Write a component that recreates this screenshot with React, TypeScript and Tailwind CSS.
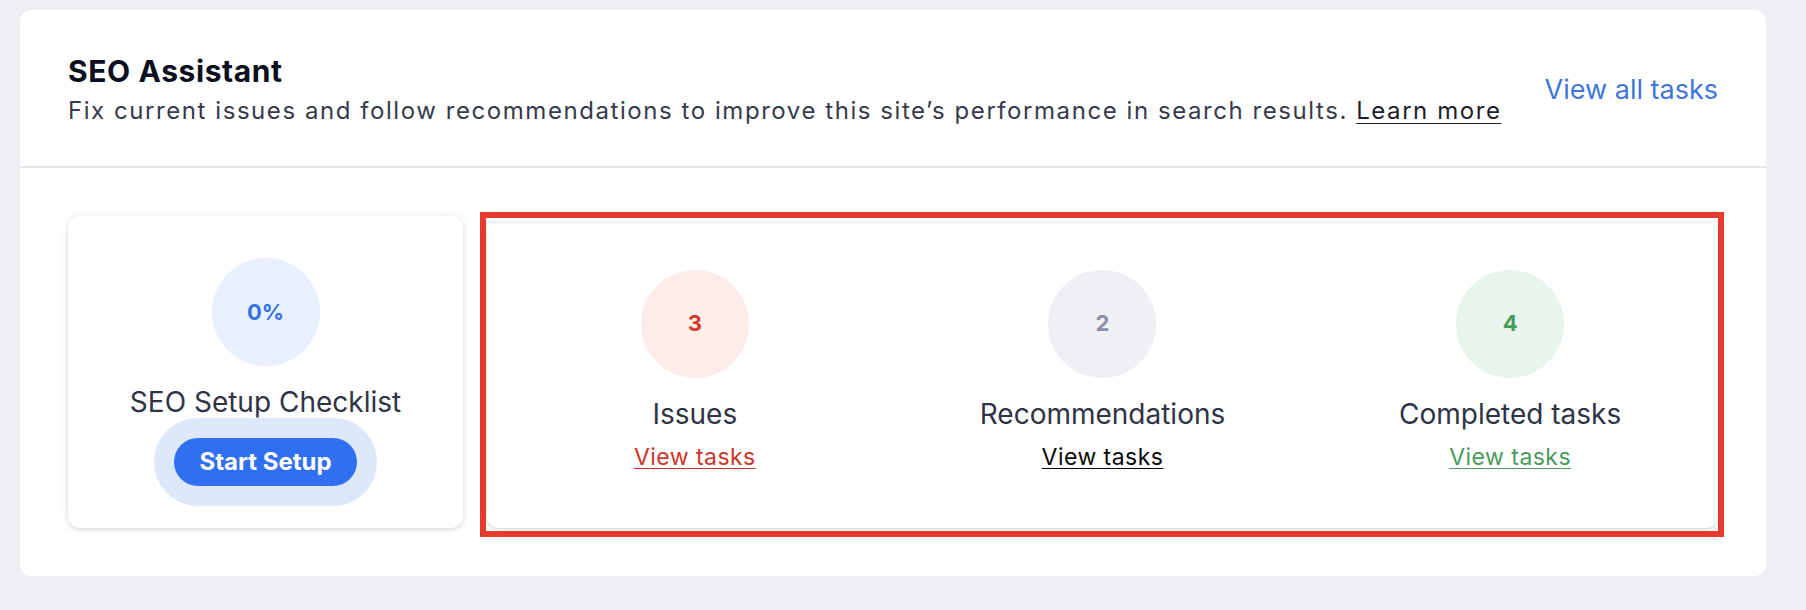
import React from "react";

function StatColumn({
  value,
  label,
  circleBg,
  valueColor,
  linkColor,
}: {
  value: string;
  label: string;
  circleBg: string;
  valueColor: string;
  linkColor: string;
}) {
  return (
    <div className="flex flex-col items-center justify-center pb-[4px]">
      <div className={`flex h-[108px] w-[108px] items-center justify-center rounded-full ${circleBg}`}>
        <span className={`text-[22px] font-bold ${valueColor}`}>{value}</span>
      </div>
      <div className="mt-5 text-[28px] leading-[32px] text-[#2f3346]">{label}</div>
      <a
        className={`mt-[14px] text-[23px] leading-[27px] tracking-[0.02em] underline underline-offset-[3px] decoration-1 ${linkColor}`}
        href="#"
      >
        View tasks
      </a>
    </div>
  );
}

export default function App() {
  return (
    <div className="min-h-screen w-full bg-[#edeff3] pt-[10px] font-['Inter',sans-serif]">
      <div className="ml-[20px] w-[1746px] rounded-[12px] bg-white">
        {/* Header */}
        <div className="flex items-center justify-between border-b-2 border-[#e4e6ea] px-12 pt-[44px] pb-[40px]">
          <div>
            <h1 className="text-[30px] font-bold leading-[34px] tracking-[0.02em] text-[#0c0f1d]">SEO Assistant</h1>
            <p className="mt-2 whitespace-nowrap text-[24px] leading-[30px] tracking-[0.065em] text-[#363a4b]">
              Fix current issues and follow recommendations to improve this site’s performance in search results.{" "}
              <a href="#" className="text-[#1b1d2a] underline underline-offset-[4px] decoration-1">
                Learn more
              </a>
            </p>
          </div>
          <a href="#" className="text-[27px] leading-[32px] text-[#3e76dc]">
            View all tasks
          </a>
        </div>

        {/* Body */}
        <div className="flex gap-6 p-12">
          <div className="flex h-[312px] w-[395px] flex-col items-center justify-center rounded-[12px] bg-white shadow-[0_2px_4px_rgba(20,30,60,0.10),0_0_10px_rgba(20,30,60,0.08)]">
            <div className="flex h-[108px] w-[108px] items-center justify-center rounded-full bg-[#e8f0fd]">
              <span className="text-[22px] font-bold text-[#3572e3]">0%</span>
            </div>
            <div className="mt-5 text-[28px] leading-[32px] text-[#2f3346]">SEO Setup Checklist</div>
            <button className="mt-5 h-[48px] rounded-full bg-[#306ff0] px-[25px] text-[24px] font-bold text-white shadow-[0_0_0_20px_#dde8fb]">
              Start Setup
            </button>
          </div>

          <div className="relative flex-1">
            <div className="grid h-[312px] grid-cols-3 rounded-[12px] bg-white px-[4px] shadow-[0_2px_3px_rgba(20,30,60,0.12),0_0_8px_rgba(20,30,60,0.06)]">
              <StatColumn
                value="3"
                label="Issues"
                circleBg="bg-[#fcecea]"
                valueColor="text-[#d33c2c]"
                linkColor="text-[#c9372a]"
              />
              <StatColumn
                value="2"
                label="Recommendations"
                circleBg="bg-[#eef0f4]"
                valueColor="text-[#8b8fa6]"
                linkColor="text-[#0b0b0b]"
              />
              <StatColumn
                value="4"
                label="Completed tasks"
                circleBg="bg-[#e8f5ec]"
                valueColor="text-[#489a5a]"
                linkColor="text-[#4b9a5c]"
              />
            </div>
            <div className="pointer-events-none absolute -left-[7px] -top-[4px] -right-[6px] -bottom-[9px] border-[6px] border-[#e43b2c]" />
          </div>
        </div>
      </div>
    </div>
  );
}
